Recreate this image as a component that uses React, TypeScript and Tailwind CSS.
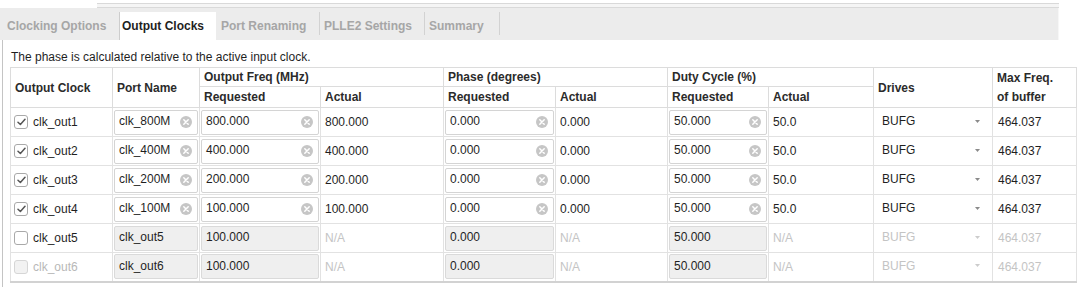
import React from 'react';

type Row = {
  name: string;
  port: string;
  freq: string;
  freqAct: string;
  phase: string;
  phaseAct: string;
  duty: string;
  dutyAct: string;
  on: boolean;
  locked?: boolean;
};

const rows: Row[] = [
  { name: 'clk_out1', port: 'clk_800M', freq: '800.000', freqAct: '800.000', phase: '0.000', phaseAct: '0.000', duty: '50.000', dutyAct: '50.0', on: true },
  { name: 'clk_out2', port: 'clk_400M', freq: '400.000', freqAct: '400.000', phase: '0.000', phaseAct: '0.000', duty: '50.000', dutyAct: '50.0', on: true },
  { name: 'clk_out3', port: 'clk_200M', freq: '200.000', freqAct: '200.000', phase: '0.000', phaseAct: '0.000', duty: '50.000', dutyAct: '50.0', on: true },
  { name: 'clk_out4', port: 'clk_100M', freq: '100.000', freqAct: '100.000', phase: '0.000', phaseAct: '0.000', duty: '50.000', dutyAct: '50.0', on: true },
  { name: 'clk_out5', port: 'clk_out5', freq: '100.000', freqAct: 'N/A', phase: '0.000', phaseAct: 'N/A', duty: '50.000', dutyAct: 'N/A', on: false },
  { name: 'clk_out6', port: 'clk_out6', freq: '100.000', freqAct: 'N/A', phase: '0.000', phaseAct: 'N/A', duty: '50.000', dutyAct: 'N/A', on: false, locked: true },
];

function ClearIcon() {
  return (
    <svg width="12" height="12" viewBox="0 0 12 12" className="absolute right-[5px] top-1/2 -translate-y-1/2">
      <circle cx="6" cy="6" r="6" fill="#c6c6c6" />
      <path d="M3.8 3.8 L8.2 8.2 M8.2 3.8 L3.8 8.2" stroke="#fff" strokeWidth="1.5" strokeLinecap="round" />
    </svg>
  );
}

function Field({ value, on }: { value: string; on: boolean }) {
  return (
    <div
      className={
        on
          ? 'relative h-[25px] flex items-center pl-[4px] pb-[2px] bg-white border border-[#d4d4d4] rounded-[2px]'
          : 'relative h-[25px] flex items-center pl-[4px] pb-[2px] bg-[#efefef] border border-[#dadada] rounded-[2px]'
      }
    >
      {value}
      {on && <ClearIcon />}
    </div>
  );
}

function Check({ checked, locked }: { checked: boolean; locked?: boolean }) {
  return (
    <span
      className={
        locked
          ? 'w-[14px] h-[14px] rounded-[3px] border border-[#d6d6d6] bg-[#f2f2f2] shrink-0'
          : 'w-[14px] h-[14px] rounded-[3px] border border-[#a9a9a9] bg-white shrink-0 flex items-center justify-center'
      }
    >
      {checked && (
        <svg width="9" height="8" viewBox="0 0 9 8">
          <path d="M1 4.2 L3.4 6.5 L8 1.3" fill="none" stroke="#555" strokeWidth="1.5" strokeLinecap="round" strokeLinejoin="round" />
        </svg>
      )}
    </span>
  );
}

function Arrow({ on }: { on: boolean }) {
  return (
    <svg width="5" height="3" viewBox="0 0 5 3" className="mr-[12px]">
      <path d="M0 0 L5 0 L2.5 3 Z" fill={on ? '#8a8a8a' : '#cccccc'} />
    </svg>
  );
}

const th = 'border border-[#dcdcdc] text-left font-bold align-middle pl-[4px] text-[#2b2b2b]';
const td = 'border border-[#e2e2e2] align-middle';

export default function App() {
  return (
    <div className="w-[1080px] h-[287px] bg-white overflow-hidden text-[12px] text-[#1f1f1f]" style={{ fontFamily: '"Liberation Sans", Arial, sans-serif' }}>
      <div className="h-[8px] pt-[3px]">
        <div className="ml-[97px] w-[962px] h-[5px] border-t border-b border-[#d9d9d9] bg-[#f5f5f5]" />
      </div>

      <div className="w-[1059px] h-[32px] bg-[#ececec] flex items-end font-bold border-r border-[#f7f7f7]">
        <div className="w-[120px] h-[28px] pl-[7px] flex items-center text-[#a6a6a6] border-r border-[#cdcdcd]">Clocking Options</div>
        <div className="w-[96px] h-[28px] pl-[2px] flex items-center bg-white text-[#1f1f1f]">Output Clocks</div>
        <div className="w-[103px] h-[28px] pl-[5px] flex items-center text-[#a6a6a6]">Port Renaming</div>
        <div className="w-px h-[23px] mb-[5px] bg-[#d2d2d2]" />
        <div className="w-[104px] h-[28px] pl-[4px] flex items-center text-[#a6a6a6]">PLLE2 Settings</div>
        <div className="w-px h-[23px] mb-[5px] bg-[#d2d2d2]" />
        <div className="w-[74px] h-[28px] pl-[4px] flex items-center text-[#a6a6a6]">Summary</div>
        <div className="w-px h-[23px] mb-[5px] bg-[#d2d2d2]" />
      </div>

      <div className="ml-[2px] border-l border-[#c4c4c4] pl-[7px] pt-[10px] h-[247px]">
        <div className="h-[14px] leading-[14px] mb-[3px] pl-[1px]">The phase is calculated relative to the active input clock.</div>

        <table className="table-fixed border-collapse w-[1066px] border border-[#cfcfcf] border-b-2 border-b-[#d2d2d2]">
          <colgroup>
            <col className="w-[102px]" />
            <col className="w-[87px]" />
            <col className="w-[121px]" />
            <col className="w-[123px]" />
            <col className="w-[112px]" />
            <col className="w-[112px]" />
            <col className="w-[101px]" />
            <col className="w-[105px]" />
            <col className="w-[119px]" />
            <col className="w-[84px]" />
          </colgroup>
          <thead>
            <tr className="h-[18px]">
              <th rowSpan={2} className={th}>Output Clock</th>
              <th rowSpan={2} className={th}>Port Name</th>
              <th colSpan={2} className={th}>Output Freq (MHz)</th>
              <th colSpan={2} className={th}>Phase (degrees)</th>
              <th colSpan={2} className={th}>Duty Cycle (%)</th>
              <th rowSpan={2} className={th}>Drives</th>
              <th rowSpan={2} className={th + ' leading-[19px] pt-[1px]'}>
                Max Freq.
                <br />
                of buffer
              </th>
            </tr>
            <tr className="h-[20px]">
              <th className={th}>Requested</th>
              <th className={th}>Actual</th>
              <th className={th}>Requested</th>
              <th className={th}>Actual</th>
              <th className={th}>Requested</th>
              <th className={th}>Actual</th>
            </tr>
          </thead>
          <tbody>
            {rows.map((r) => (
              <tr key={r.name} className="h-[29px]">
                <td className={td}>
                  <div className="flex items-center gap-[5px] pl-[3px]">
                    <Check checked={r.on} locked={r.locked} />
                    <span className={r.locked ? 'text-[#b8b8b8]' : ''}>{r.name}</span>
                  </div>
                </td>
                <td className={td + ' px-[1px]'}><Field value={r.port} on={r.on} /></td>
                <td className={td + ' px-[1px]'}><Field value={r.freq} on={r.on} /></td>
                <td className={td + ' pl-[4px]' + (r.on ? '' : ' text-[#c4c4c4]')}>{r.freqAct}</td>
                <td className={td + ' px-[1px]'}><Field value={r.phase} on={r.on} /></td>
                <td className={td + ' pl-[4px]' + (r.on ? '' : ' text-[#c4c4c4]')}>{r.phaseAct}</td>
                <td className={td + ' px-[1px]'}><Field value={r.duty} on={r.on} /></td>
                <td className={td + ' pl-[4px]' + (r.on ? '' : ' text-[#c4c4c4]')}>{r.dutyAct}</td>
                <td className={td}>
                  <div className={'flex items-center justify-between pl-[8px] pb-[2px]' + (r.on ? '' : ' text-[#c4c4c4]')}>
                    <span>BUFG</span>
                    <Arrow on={r.on} />
                  </div>
                </td>
                <td className={td + ' pl-[5px]' + (r.on ? '' : ' text-[#c4c4c4]')}>464.037</td>
              </tr>
            ))}
          </tbody>
        </table>
      </div>
    </div>
  );
}
